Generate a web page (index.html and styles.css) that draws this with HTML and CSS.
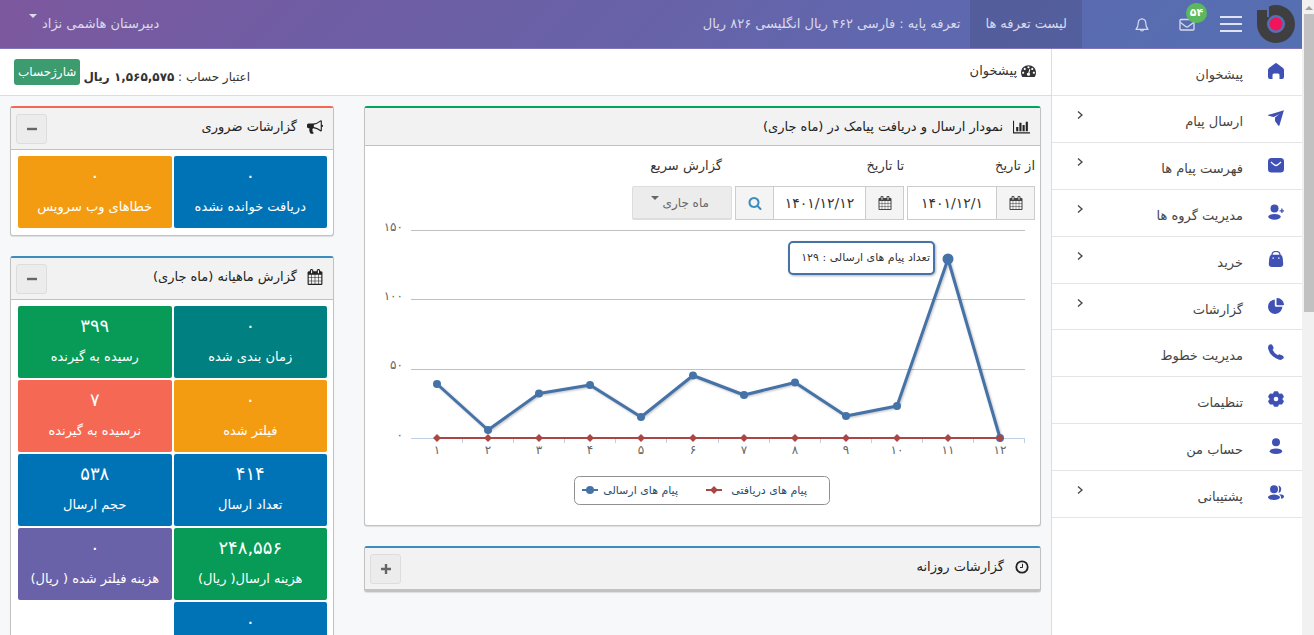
FILE: index.html
```
<!DOCTYPE html>
<html lang="fa" dir="rtl">
<head>
<meta charset="utf-8">
<title>پیشخوان</title>
<link rel="stylesheet" href="styles.css">
</head>
<body>
<svg class="sprite" aria-hidden="true">
  <symbol id="calendar" viewBox="0 0 1792 1792"><path d="M192 1664h288v-288h-288v288zm352 0h320v-288h-320v288zm-352-352h288v-320h-288v320zm352 0h320v-320h-320v320zm-352-384h288v-288h-288v288zm736 736h320v-288h-320v288zm-384-736h320v-288h-320v288zm768 736h288v-288h-288v288zm-384-352h320v-320h-320v320zm-352-864v-288q0-13-9.5-22.5t-22.5-9.5h-64q-13 0-22.5 9.5t-9.5 22.5v288q0 13 9.5 22.5t22.5 9.5h64q13 0 22.5-9.5t9.5-22.5zm736 864h288v-320h-288v320zm-384-384h320v-288h-320v288zm384 0h288v-288h-288v288zm32-480v-288q0-13-9.5-22.5t-22.5-9.5h-64q-13 0-22.5 9.5t-9.5 22.5v288q0 13 9.5 22.5t22.5 9.5h64q13 0 22.5-9.5t9.5-22.5zm384-64v1280q0 52-38 90t-90 38h-1408q-52 0-90-38t-38-90v-1280q0-52 38-90t90-38h128v-96q0-66 47-113t113-47h64q66 0 113 47t47 113v96h384v-96q0-66 47-113t113-47h64q66 0 113 47t47 113v96h128q52 0 90 38t38 90z"/></symbol>
  <symbol id="chevron" viewBox="0 0 8 10"><path d="M2 1.500 6 5 2 8.500" fill="none" stroke="currentColor" stroke-width="1.300"/></symbol>
  <symbol id="caret" viewBox="0 0 8 4"><path d="M0 0h8L4 4z"/></symbol>
</svg>
<div class="window">
  <div class="scroll" aria-hidden="true">
    <svg class="scroll-arrow" viewBox="0 0 8 4"><path d="M0 4h8L4 0z"/></svg>
    <div class="thumb"></div>
  </div>
  <div class="app">
    <header class="topbar">
      <a class="logo" href="#" aria-label="خانه">
        <svg viewBox="0 0 38 38"><path d="M0 5h10v7h2V1.500Q15 0 19 0A19 19 0 1 1 0 19z" fill="#3f3f41"/><circle cx="19" cy="19" r="9" fill="#5670b3"/><circle cx="19" cy="19" r="6.500" fill="#f0145a"/></svg>
      </a>
      <button class="burger" type="button" aria-label="منو"><span></span><span></span><span></span></button>
      <a class="notice" href="#" aria-label="پیام ها">
        <svg viewBox="0 0 16 13"><rect x="1" y="1.500" width="14" height="10.500" rx="1" fill="none" stroke="currentColor" stroke-width="1.300"/><path d="M1.500 4.500 7 8.700q1 .6 2 0l5.500-4.200" fill="none" stroke="currentColor" stroke-width="1.300"/></svg>
        <span class="badge">۵۴</span>
      </a>
      <a class="bell" href="#" aria-label="اعلان ها">
        <svg viewBox="0 0 14 15"><path d="M7 1v1M1 12.300h12Q10.800 10 10.800 6.500C10.800 3.500 9.500 2 7 2S3.200 3.500 3.200 6.500Q3.200 10 1 12.300zM5.500 12.500a1.500 1.500 0 0 0 3 0" fill="none" stroke="currentColor" stroke-width="1.200" stroke-linejoin="round"/></svg>
      </a>
      <a class="tariffs" href="#">لیست تعرفه ها</a>
      <span class="rate">تعرفه پایه : فارسی ۴۶۲ ریال انگلیسی ۸۲۶ ریال</span>
      <button class="user" type="button">دبیرستان هاشمی نژاد <svg class="caret"><use href="#caret"/></svg></button>
    </header>
    <div class="below">
      <nav class="side">
        <a href="#"><svg viewBox="0 0 16 16"><path d="M7 .5q1-.8 2 0l6 4.500q1 .8 1 2V14q0 2-2 2h-2.500v-4q0-1.500-1.500-1.500H6Q4.500 10.500 4.500 12v4H2q-2 0-2-2V7q0-1.200 1-2z"/></svg><span>پیشخوان</span></a>
        <a href="#"><svg viewBox="0 0 16 16"><path d="M15.900.2 11.500 15.300q-.5 1.200-1.300.2L7 11V7.500L11.500 4 5.800 7 .4 5.800Q-.4 5.300.6 4.800z"/></svg><span>ارسال پیام</span><svg class="chev"><use href="#chevron"/></svg></a>
        <a href="#"><svg viewBox="0 0 16 16"><rect y="1" width="16" height="14.500" rx="3.500"/><path d="M3 5q3.500 3.500 5 3.500T13 5" fill="none" stroke="#fff" stroke-width="1.300"/></svg><span>فهرست پیام ها</span><svg class="chev"><use href="#chevron"/></svg></a>
        <a href="#"><svg viewBox="0 0 16 16"><circle cx="6.500" cy="4.500" r="4"/><ellipse cx="6.500" cy="12.800" rx="6.300" ry="2.900"/><path d="M13.900 4.500v4.600M11.600 6.800h4.600" stroke="currentColor" stroke-width="1.300"/></svg><span>مدیریت گروه ها</span><svg class="chev"><use href="#chevron"/></svg></a>
        <a href="#"><svg viewBox="0 0 16 16"><path d="M4 5V4q0-3.500 4-3.500T12 4v1" fill="none" stroke="currentColor" stroke-width="1.200"/><path d="M3.500 3.800h9Q14.300 4 14.700 7l.5 6q0 3-3 3H3.800q-3 0-3-3l.5-6q.4-3 2.200-3.200z"/><path d="M4.500 6.500h1.400v1.300H4.500zM10.100 6.500h1.400v1.300h-1.400z" fill="#fff"/></svg><span>خرید</span><svg class="chev"><use href="#chevron"/></svg></a>
        <a href="#"><svg viewBox="0 0 16 16"><path d="M6.800 1.500v5.700q0 1.600 1.600 1.600h6A7.200 7.200 0 1 1 6.800 1.500z"/><path d="M8.500.8Q8.500 0 9.300 0A7 7 0 0 1 16 6.500q0 .8-.8.8H9.300q-.8 0-.8-.8z"/></svg><span>گزارشات</span><svg class="chev"><use href="#chevron"/></svg></a>
        <a href="#"><svg viewBox="0 0 16 16"><path d="M1.200.8Q3.500-.6 4.600 1.400l1 2.400q.2.800-1 2Q6 9.300 9.800 11.200q1.200-1 2-.8l2.600 1q2.400 1.400.8 3.200-2 2-4.600 1Q2.200 12.300.2 5-.4 2.200 1.200.8z"/></svg><span>مدیریت خطوط</span></a>
        <a href="#"><svg viewBox="0 0 16 16"><path d="M6.500 1h3l.7 1.800 1.400.8 2.100-.3 1.400 2.400L13.800 7.300v1.400l1.300 1.600-1.400 2.400-2.100-.3-1.400.8L9.500 15h-3l-.7-1.800-1.400-.8-2.100.3-1.400-2.400L2.200 8.700V7.300L.9 5.700l1.400-2.400 2.100.3 1.400-.8z" stroke="currentColor" stroke-width="1.500" stroke-linejoin="round"/><circle cx="8" cy="8" r="2.300" fill="#fff"/></svg><span>تنظیمات</span></a>
        <a href="#"><svg viewBox="0 0 16 16"><circle cx="8" cy="4.300" r="4"/><ellipse cx="8" cy="13.200" rx="6.300" ry="2.800"/></svg><span>حساب من</span></a>
        <a href="#"><svg viewBox="0 0 16 16"><circle cx="6" cy="4.300" r="4"/><ellipse cx="6" cy="12.300" rx="6" ry="2.700"/><path d="M10.500.5a4 4 0 0 1 0 7.600q1.500-3.800 0-7.600zM11 9.200q5 0 5 2.400 0 1.900-3 2.200.6-3-2-4.600z"/></svg><span>پشتیبانی</span><svg class="chev"><use href="#chevron"/></svg></a>
      </nav>
      <main class="main">
        <div class="crumbs">
          <h1><svg viewBox="0 0 1792 1792"><path d="M384 1152q0-53-37.500-90.500t-90.500-37.500-90.500 37.500-37.500 90.500 37.500 90.500 90.500 37.500 90.500-37.500 37.500-90.500zm192-448q0-53-37.500-90.500t-90.500-37.500-90.500 37.500-37.500 90.500 37.500 90.500 90.500 37.500 90.500-37.500 37.500-90.500zm428 481l101-382q6-26-7.500-48.500t-38.500-29.500-48 6.500-30 39.500l-101 382q-60 5-107 43.500t-63 98.500q-20 77 20 146t117 89 146-20 89-117q16-60-6-117t-72-91zm660-33q0-53-37.500-90.500t-90.500-37.500-90.500 37.500-37.500 90.500 37.500 90.500 90.500 37.500 90.500-37.500 37.500-90.500zm-640-640q0-53-37.500-90.500t-90.500-37.500-90.500 37.500-37.500 90.500 37.500 90.500 90.500 37.500 90.500-37.500 37.500-90.500zm448 192q0-53-37.500-90.500t-90.500-37.500-90.500 37.500-37.500 90.500 37.500 90.500 90.500 37.500 90.500-37.500 37.500-90.500zm320 448q0 261-141 483-19 29-54 29h-1402q-35 0-54-29-141-221-141-483 0-182 71-348t191-286 286-191 348-71 348 71 286 191 191 286 71 348z"/></svg>پیشخوان</h1>
          <div class="credit"><span>اعتبار حساب : <b>۱,۵۶۵,۵۷۵ ریال</b></span><button type="button">شارژحساب</button></div>
        </div>
        <div class="board">
          <div class="col">
            <section class="panel green">
              <h2 class="wide"><svg class="bars" viewBox="0 0 2048 1792"><path d="M640 896v512h-256v-512h256zm384-512v1024h-256v-1024h256zm1024 1152v128h-2048v-1536h128v1408h1920zm-640-896v768h-256v-768h256zm384-384v1152h-256v-1152h256z"/></svg><span>نمودار ارسال و دریافت پیامک در (ماه جاری)</span></h2>
              <form class="filters">
                <div class="from"><label for="from">از تاریخ</label>
                  <div class="group"><span class="addon"><svg><use href="#calendar"/></svg></span><input id="from" type="text" value="۱۴۰۱/۱۲/۱"></div></div>
                <div class="to"><label for="to">تا تاریخ</label>
                  <div class="group"><span class="addon"><svg><use href="#calendar"/></svg></span><input id="to" type="text" value="۱۴۰۱/۱۲/۱۲"><button class="addon find" type="button" aria-label="جستجو"><svg viewBox="0 0 1792 1792"><path d="M1216 832q0-185-131.500-316.500t-316.500-131.500-316.500 131.500-131.500 316.500 131.500 316.500 316.500 131.500 316.500-131.500 131.500-316.500zm512 832q0 52-38 90t-90 38q-54 0-90-38l-343-342q-179 124-399 124-143 0-273.500-55.500t-225-150-150-225-55.500-273.500 55.500-273.500 150-225 225-150 273.500-55.500 273.500 55.500 225 150 150 225 55.500 273.500q0 220-124 399l343 343q37 37 37 90z"/></svg></button></div></div>
                <div class="quick"><label for="quick">گزارش سریع</label>
                  <div class="select"><select id="quick"><option>ماه جاری</option></select><svg class="caret"><use href="#caret"/></svg></div></div>
              </form>
              <svg class="chart" viewBox="0 0 675 304" role="img" aria-label="نمودار پیامک">
                <path class="grid" d="M46 9.500h614M46 78.500h614M46 148.500h614"/>
                <path class="axis" d="M46 217.500h614M97.500 217v5M148.500 217v5M199.500 217v5M250.500 217v5M301.500 217v5M353.500 217v5M404.500 217v5M455.500 217v5M506.500 217v5M557.500 217v5M608.500 217v5M659.500 217v5"/>
                <g class="ylab"><text x="38" y="10">۱۵۰</text><text x="38" y="79">۱۰۰</text><text x="38" y="148">۵۰</text><text x="38" y="218">۰</text></g>
                <g class="xlab"><text x="72" y="233">۱</text><text x="123" y="233">۲</text><text x="174" y="233">۳</text><text x="225" y="233">۴</text><text x="276" y="233">۵</text><text x="328" y="233">۶</text><text x="379" y="233">۷</text><text x="430" y="233">۸</text><text x="481" y="233">۹</text><text x="532" y="233">۱۰</text><text x="583" y="233">۱۱</text><text x="635" y="233">۱۲</text></g>
                <path class="line" d="M72 163 123 209 174 172.500 225 164 276 196 328 154.500 379 174 430 161.500 481 195 532 185 583 38 635 217"/>
                <g class="sent"><circle cx="72" cy="163" r="4"/><circle cx="123" cy="209" r="4"/><circle cx="174" cy="172.500" r="4"/><circle cx="225" cy="164" r="4"/><circle cx="276" cy="196" r="4"/><circle cx="328" cy="154.500" r="4"/><circle cx="379" cy="174" r="4"/><circle cx="430" cy="161.500" r="4"/><circle cx="481" cy="195" r="4"/><circle cx="532" cy="185" r="4"/><circle cx="583" cy="38" r="5.500"/><circle cx="635" cy="217" r="4"/><circle cx="225" cy="269" r="4"/><path d="M217 269h16" stroke="#4572a7" stroke-width="2"/></g>
                <path class="received-line" d="M72 217H635M341 269h16"/>
                <path class="received" d="M72 213l4 4-4 4-4-4zM123 213l4 4-4 4-4-4zM174 213l4 4-4 4-4-4zM225 213l4 4-4 4-4-4zM276 213l4 4-4 4-4-4zM328 213l4 4-4 4-4-4zM379 213l4 4-4 4-4-4zM430 213l4 4-4 4-4-4zM481 213l4 4-4 4-4-4zM532 213l4 4-4 4-4-4zM583 213l4 4-4 4-4-4zM635 213l4 4-4 4-4-4zM349 265l4 4-4 4-4-4z"/>
                <rect class="tip" x="424" y="21" width="145" height="32" rx="4"/>
                <text class="tiptext" x="565" y="40">تعداد پیام های ارسالی : ۱۲۹</text>
                <rect class="legend" x="209.500" y="255.500" width="255" height="28" rx="5"/>
                <text class="legtext" x="442" y="273">پیام های دریافتی</text>
                <text class="legtext" x="313" y="273">پیام های ارسالی</text>
              </svg>
            </section>
            <section class="panel blue closed">
              <h2><svg viewBox="0 0 16 16"><circle cx="8" cy="8" r="5.700" fill="none" stroke="currentColor" stroke-width="1.800"/><path d="M8.500 4.800v3.700H6" fill="none" stroke="currentColor"/></svg><span>گزارشات روزانه</span><button type="button" aria-label="باز کردن"><svg viewBox="0 0 10 10"><path d="M0 5h10M5 0v10" stroke="currentColor" stroke-width="2.400"/></svg></button></h2>
            </section>
          </div>
          <div class="col">
            <section class="panel red">
              <h2><svg viewBox="0 0 1792 1792"><path d="M1664 640q53 0 90.500 37.500t37.500 90.500-37.500 90.500-90.500 37.500v384q0 52-38 90t-90 38q-417-347-812-380-58 19-91 66t-31 100.500 40 92.500q-20 33-23 65.500t6 58 33.500 55 48 50 61.500 50.500q-29 58-111.500 83t-168.500 11.500-132-55.500q-7-23-29.500-87.500t-32-94.500-23-89-15-101 3.500-98.500 22-110.500h-122q-66 0-113-47t-47-113v-192q0-66 47-113t113-47h480q435 0 896-384 52 0 90 38t38 90v384zm-128 604v-954q-394 302-768 343v270q377 42 768 341z"/></svg><span>گزارشات ضروری</span><button type="button" aria-label="بستن"><svg viewBox="0 0 10 10"><path d="M0 5h10" stroke="currentColor" stroke-width="2.400"/></svg></button></h2>
              <div class="tiles">
                <a class="tile c-blue" href="#"><b>۰</b><span>دریافت خوانده نشده</span></a>
                <a class="tile c-orange" href="#"><b>۰</b><span>خطاهای وب سرویس</span></a>
              </div>
            </section>
            <section class="panel blue">
              <h2><svg viewBox="0 0 1792 1792"><use href="#calendar"/></svg><span>گزارش ماهیانه (ماه جاری)</span><button type="button" aria-label="بستن"><svg viewBox="0 0 10 10"><path d="M0 5h10" stroke="currentColor" stroke-width="2.400"/></svg></button></h2>
              <div class="tiles">
                <a class="tile c-teal" href="#"><b>۰</b><span>زمان بندی شده</span></a>
                <a class="tile c-green" href="#"><b>۳۹۹</b><span>رسیده به گیرنده</span></a>
                <a class="tile c-orange" href="#"><b>۰</b><span>فیلتر شده</span></a>
                <a class="tile c-red" href="#"><b>۷</b><span>نرسیده به گیرنده</span></a>
                <a class="tile c-blue" href="#"><b>۴۱۴</b><span>تعداد ارسال</span></a>
                <a class="tile c-blue" href="#"><b>۵۳۸</b><span>حجم ارسال</span></a>
                <a class="tile c-green" href="#"><b>۲۴۸,۵۵۶</b><span>هزینه ارسال( ریال)</span></a>
                <a class="tile c-purple" href="#"><b>۰</b><span>هزینه فیلتر شده ( ریال)</span></a>
                <a class="tile c-blue" href="#"><b>۰</b></a>
              </div>
            </section>
          </div>
        </div>
      </main>
    </div>
  </div>
</div>
</body>
</html>
```
FILE: styles.css
```
* { box-sizing: border-box; }
body { margin: 0; font: 13px/20px "DejaVu Sans", sans-serif; color: #333; background: #f7f8fa; }
a { color: inherit; text-decoration: none; }
button, input, select { font: inherit; color: inherit; margin: 0; }
svg { fill: currentColor; display: block; flex: none; }
.sprite { position: absolute; width: 0; height: 0; }
.window { display: flex; height: 100vh; overflow: hidden; }
.scroll { width: 12px; background: #f1f1f1; padding-top: 6px; display: flex; flex-direction: column; gap: 4px; }
.scroll-arrow { width: 8px; height: 4px; margin-right: 1px; fill: #a3a3a3; }
.thumb { height: 47vh; margin-left: 2px; background: #c1c1c1; }
.app { flex: 1; min-width: 0; display: flex; flex-direction: column; }

.topbar { display: flex; align-items: center; height: 49px; flex: none; padding: 0 7px 0 21px; color: #d9daec; border-bottom: 1px solid #8075b8; background: linear-gradient(-45deg, #5470b2, #5e68af 28%, #6763a9 48%, #6f5da4 75%, #7d589e); }
.logo { width: 38px; height: 38px; }
.burger { width: 22px; height: 16px; padding: 0; margin: 0 15px 0 25px; border: 0; background: none; display: flex; flex-direction: column; justify-content: space-between; }
.burger span { height: 2px; background: #dfe2f1; }
.notice { position: relative; }
.notice svg { width: 16px; height: 13px; }
.badge { position: absolute; top: -15px; right: -12px; width: 21px; height: 20px; border-radius: 10px; background: #5cb85c; color: #fff; font-size: 11px; font-weight: bold; text-align: center; }
.bell { margin-right: 30px; }
.bell svg { width: 14px; height: 15px; }
.tariffs { display: flex; align-items: center; align-self: stretch; margin-right: 53px; padding: 0 15px; background: rgba(60, 60, 100, .25); }
.rate { margin-right: 10px; }
.user { display: flex; gap: 5px; margin: 0 auto 0 8px; padding: 0; border: 0; background: none; }
.caret { width: 8px; height: 4px; }

.below { flex: 1; min-height: 0; display: flex; background: #fff; }
.side { width: 250px; flex: none; display: grid; grid-auto-rows: 1fr; align-content: start; height: 469px; color: #444; }
.side a { display: flex; align-items: flex-start; padding: 14px 18px 0 24px; gap: 25px; border-bottom: 1px solid #e5e5e5; }
.side a > svg { width: 16px; height: 16px; color: #3f51b5; }
.side span { flex: 1; padding-top: 2px; }
.side a > .chev { width: 8px; height: 10px; color: #444; }

.main { flex: 1; min-width: 0; background: #f7f8fa; border-right: 1px solid #ddd; }
.crumbs { height: 47px; display: flex; justify-content: space-between; padding: 0 15px 0 14px; background: #fff; border-bottom: 1px solid #dcdcdc; }
.crumbs h1 { display: flex; gap: 4px; margin: 12px 0 0; font: inherit; }
.crumbs h1 svg { width: 15px; height: 15px; margin-top: 2px; }
.credit { display: flex; gap: 3px; font-size: 12px; padding-top: 10px; align-items: flex-start; }
.credit span { padding-top: 8px; }
.credit button { height: 26px; padding: 0 4px; border: 0; border-radius: 3px; background: #3c9b6f; color: #fff; font-size: 12px; }

.board { display: grid; grid-template-columns: minmax(0, 1fr) 324px; gap: 30px; padding: 10px 10px 0; }
.col { display: flex; flex-direction: column; gap: 20px; }
.panel { background: #fff; border: 1px solid #c2c2c2; border-top: 2px solid; border-radius: 3px; box-shadow: 0 1px 1px rgba(0, 0, 0, .1); }
.panel.green { border-top-color: #00a65a; }
.panel.blue { border-top-color: #3c8dbc; }
.panel.red { border-top-color: #f56954; }
.panel h2 { display: flex; align-items: center; gap: 10px; height: 42px; margin: 0; padding: 0 10px 0 5px; font: inherit; color: #222; background: #f2f2f2; border-bottom: 1px solid #c2c2c2; }
.panel h2.wide { height: 38px; }
.panel h2 > svg { width: 16px; height: 16px; margin-bottom: 3px; }
.panel h2 > .bars { width: 17px; margin-bottom: 0; }
.panel h2 span { flex: 1; padding-bottom: 3px; }
.panel h2.wide span { padding-bottom: 0; }
.panel h2 button { display: grid; place-items: center; width: 31px; height: 30px; padding: 0; border: 1px solid #ddd; border-radius: 3px; background: #ececec; color: #666; }
.panel h2 button svg { width: 10px; height: 10px; }
.panel.closed h2 { height: 43px; border-bottom-width: 2px; }

.filters { display: flex; gap: 3px; padding: 10px 5px 1px 0; }
.filters label { display: block; height: 30px; }
.group { display: flex; height: 34px; }
.addon { display: grid; place-items: center; width: 39px; padding: 0; border: 1px solid #ccc; background: #f4f4f4; color: #444; }
.addon svg { width: 14px; height: 14px; }
.find { color: #3c8dbc; }
.group input { width: 89px; padding: 0 8px; border: solid #ccc; border-width: 1px 0 1px 1px; background: #fff; font-size: 14px; text-align: center; }
.to input { width: 91px; border-left: 0; padding: 0; }
.quick label { padding-right: 10px; }
.select { position: relative; }
.select select { appearance: none; width: 100px; height: 34px; padding: 0 22px; border: 1px solid #ddd; border-bottom-width: 2px; border-radius: 2px; background: #ececec; color: #666; font-size: 12px; }
.select .caret { position: absolute; left: 19px; top: 10px; color: #666; }

.chart { width: 100%; direction: rtl; font-size: 11px; }
.grid { stroke: #c0c0c0; fill: none; }
.axis { stroke: #c0d0e0; fill: none; }
.ylab, .xlab { direction: ltr; fill: #666; }
.ylab { text-anchor: end; font-size: 12px; }
.xlab { text-anchor: middle; font-size: 12px; }
.line { fill: none; stroke: #4572a7; stroke-width: 3; stroke-linejoin: round; filter: drop-shadow(1px 1px 1px rgba(0, 0, 0, .25)); }
.sent { fill: #4572a7; }
.received { fill: #aa4643; }
.received-line { stroke: #aa4643; stroke-width: 2; }
.tip { fill: #fff; stroke: #4572a7; stroke-width: 2; filter: drop-shadow(1px 1px 1px rgba(0, 0, 0, .3)); }
.tiptext { fill: #333; }
.legend { fill: none; stroke: #909090; }
.legtext { fill: #274b6d; }

.tiles { display: grid; grid-template-columns: 1fr 1fr; gap: 2px; padding: 6px 6px 7px 7px; }
.tile { display: flex; flex-direction: column; align-items: center; gap: 11px; height: 72px; padding-top: 10px; border-radius: 2px; color: #fff; }
.tile b { font-weight: normal; font-size: 18px; }
.c-blue { background: #0073b7; }
.c-orange { background: #f39c12; }
.c-teal { background: #008080; }
.c-green { background: #079b57; }
.c-red { background: #f56954; }
.c-purple { background: #6a62a8; }
```
